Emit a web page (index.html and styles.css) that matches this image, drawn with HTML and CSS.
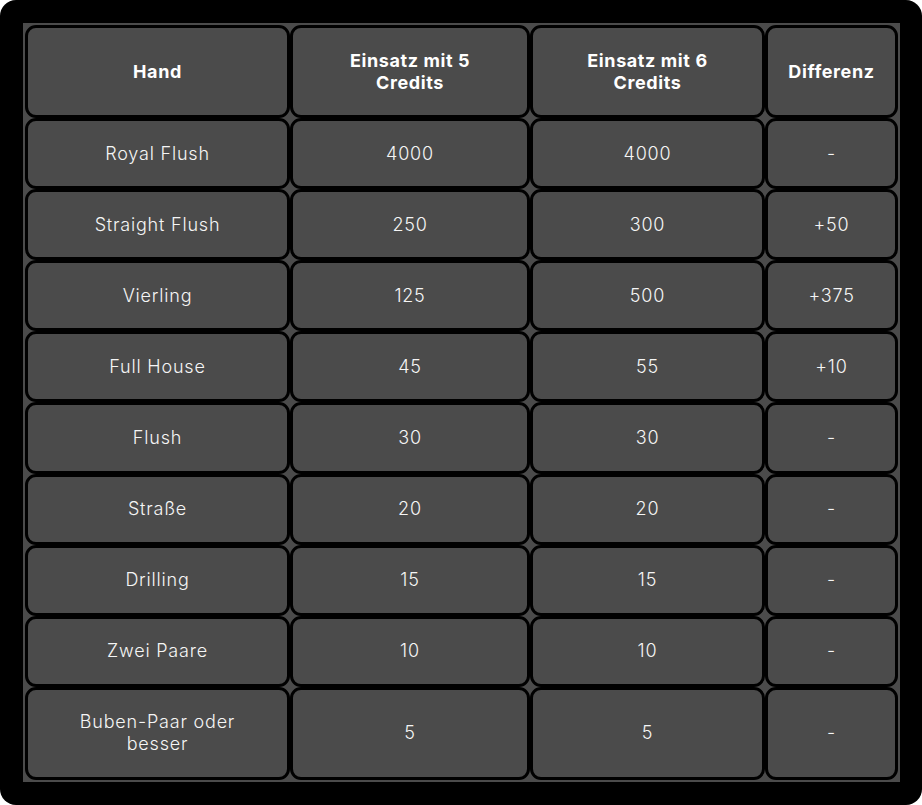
FILE: index.html
```html
<!DOCTYPE html>
<html lang="de">
<head>
<meta charset="utf-8">
<title>Auszahlungstabelle</title>
<link rel="stylesheet" href="styles.css">
</head>
<body>
<div class="frame">
  <table class="pay">
    <thead>
      <tr>
        <th class="c1">Hand</th>
        <th class="c2">Einsatz mit 5<br>Credits</th>
        <th class="c3">Einsatz mit 6<br>Credits</th>
        <th class="c4">Differenz</th>
      </tr>
    </thead>
    <tbody>
      <tr><td>Royal Flush</td><td>4000</td><td>4000</td><td>-</td></tr>
      <tr><td>Straight Flush</td><td>250</td><td>300</td><td>+50</td></tr>
      <tr><td>Vierling</td><td>125</td><td>500</td><td>+375</td></tr>
      <tr><td>Full House</td><td>45</td><td>55</td><td>+10</td></tr>
      <tr><td>Flush</td><td>30</td><td>30</td><td>-</td></tr>
      <tr><td>Straße</td><td>20</td><td>20</td><td>-</td></tr>
      <tr><td>Drilling</td><td>15</td><td>15</td><td>-</td></tr>
      <tr><td>Zwei Paare</td><td>10</td><td>10</td><td>-</td></tr>
      <tr><td>Buben-Paar oder<br>besser</td><td>5</td><td>5</td><td>-</td></tr>
    </tbody>
  </table>
</div>
</body>
</html>
```

FILE: styles.css
```css
html, body {
  margin: 0;
  padding: 0;
  background: #ffffff;
}
.frame {
  width: 922px;
  height: 805px;
  box-sizing: border-box;
  background: #000;
  border-radius: 16px;
  padding: 23px;
}
.pay {
  width: 877px;
  border-collapse: separate;
  border-spacing: 0;
  background: #4b4b4b;
  padding: 2px;
  table-layout: fixed;
  font-family: "Inter", "Liberation Sans", sans-serif;
  color: #f5f5f5;
}
.pay th, .pay td {
  box-sizing: border-box;
  background: #4b4b4b;
  border: 3px solid #000;
  border-radius: 11px;
  text-align: center;
  vertical-align: middle;
  padding: 21.55px 4px;
  line-height: 22px;
}
.pay th {
  font-weight: 700;
  font-size: 18px;
  letter-spacing: 0.6px;
  color: #fff;
}
.pay td {
  font-weight: 300;
  font-size: 18px;
  letter-spacing: 0.8px;
}
.c1 { width: 265px; }
.c2 { width: 240px; }
.c3 { width: 235px; }
.c4 { width: 133px; }
```
